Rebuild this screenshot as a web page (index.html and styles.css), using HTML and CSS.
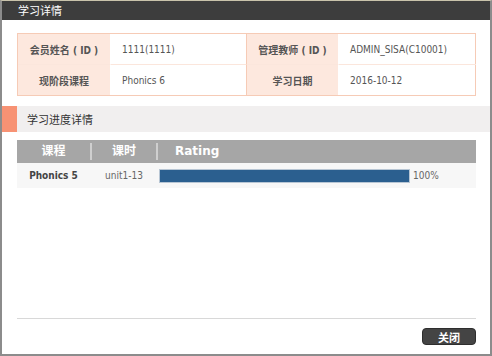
FILE: index.html
```html
<!DOCTYPE html>
<html lang="zh-CN">
<head>
    <meta charset="UTF-8">
    <title>学习详情</title>
    <link rel="stylesheet" href="styles.css">
</head>
<body>
    <div class="dialog">
        <div class="dialog-header">学习详情</div>

        <div class="info-table">
            <div class="info-label">会员姓名 ( ID )</div>
            <div class="info-value">1111(1111)</div>
            <div class="info-label">管理教师 ( ID )</div>
            <div class="info-value">ADMIN_SISA(C10001)</div>
            <div class="info-label row-last">现阶段课程</div>
            <div class="info-value row-last">Phonics 6</div>
            <div class="info-label row-last">学习日期</div>
            <div class="info-value row-last">2016-10-12</div>
        </div>

        <div class="section-title">
            <span class="section-accent"></span>
            <span class="section-text">学习进度详情</span>
        </div>

        <div class="progress-table">
            <div class="progress-head">
                <div class="col-course">课程</div>
                <div class="col-lesson">课时</div>
                <div class="col-rating">Rating</div>
            </div>
            <div class="progress-row">
                <div class="col-course course-name">Phonics 5</div>
                <div class="col-lesson">unit1-13</div>
                <div class="col-rating">
                    <div class="bar-track"><div class="bar-fill" style="width: 100%"></div></div>
                    <span class="bar-value">100%</span>
                </div>
            </div>
        </div>

        <div class="dialog-footer">
            <button class="close-btn">关闭</button>
        </div>
    </div>
</body>
</html>
```

FILE: styles.css
```css
* {
    margin: 0;
    padding: 0;
    box-sizing: border-box;
}

body {
    background: #ffffff;
    font-family: 'DejaVu Sans Condensed', 'DejaVu Sans', 'Noto Sans CJK SC', sans-serif;
    font-stretch: condensed;
    font-size: 10px;
    color: #444444;
}

.dialog {
    width: 492px;
    height: 356px;
    display: flex;
    flex-direction: column;
    border: 2px solid #8c8c8c;
    border-top: 1px solid #c9c3ab;
    background: #ffffff;
}

.dialog-header {
    height: 19px;
    line-height: 19px;
    background: #3d3d3d;
    color: #ffffff;
    font-size: 11px;
    padding-left: 16px;
    font-family: 'Noto Sans CJK SC', sans-serif;
}

.info-table {
    display: grid;
    grid-template-columns: 93px 136px 92px 137px;
    margin: 13px 14px 0 15px;
    border: 1px solid #f6cbb6;
}

.info-label,
.info-value {
    height: 31px;
    display: flex;
    align-items: center;
    border-bottom: 1px solid #fbe6dc;
}

.info-label {
    justify-content: center;
    background: #fde8de;
    font-weight: bold;
    color: #555555;
    border-right: 1px solid #ffffff;
}

.info-value {
    padding-left: 11px;
    color: #555555;
    border-right: 1px solid #f6cbb6;
}

.info-value:nth-child(4n) {
    border-right: none;
}

.row-last {
    border-bottom: none;
    height: 30px;
}

.section-title {
    display: flex;
    height: 26px;
    margin-top: 10px;
    background: #f1efef;
}

.section-accent {
    width: 15px;
    background: #f79274;
}

.section-text {
    line-height: 26px;
    padding-left: 10px;
    font-size: 11px;
    color: #333333;
    font-family: 'Noto Sans CJK SC', sans-serif;
}

.progress-table {
    margin: 8px 14px 0 15px;
}

.progress-head,
.progress-row {
    display: grid;
    grid-template-columns: 73px 68px 1fr;
}

.progress-head {
    height: 23px;
    background: #a6a6a6;
    color: #ffffff;
    font-weight: bold;
    font-size: 12px;
    align-items: center;
}

.progress-head > div {
    text-align: center;
    line-height: 17px;
}

.progress-head .col-lesson {
    border-left: 2px solid #cfcfcf;
    border-right: 2px solid #cfcfcf;
}

.progress-head .col-rating {
    text-align: left;
    padding-left: 17px;
    font-family: 'DejaVu Sans', sans-serif;
    font-stretch: normal;
}

.progress-row {
    height: 25px;
    background: #f7f7f7;
    align-items: center;
}

.progress-row .col-course,
.progress-row .col-lesson {
    text-align: center;
    color: #666666;
}

.course-name {
    font-weight: bold;
    color: #444444 !important;
}

.progress-row .col-rating {
    display: flex;
    align-items: center;
    padding-left: 1px;
}

.bar-track {
    width: 251px;
    height: 14px;
    border: 1px solid #b8c6d4;
    background: #ffffff;
}

.bar-fill {
    height: 100%;
    background: #2b5f8f;
}

.bar-value {
    margin-left: 3px;
    color: #666666;
}

.dialog-footer {
    margin: auto 14px 0 15px;
    height: 36px;
    border-top: 1px solid #d8d8d8;
    display: flex;
    justify-content: flex-end;
    padding-top: 9px;
}

.close-btn {
    width: 54px;
    height: 17px;
    background: #444444;
    border: 1px solid #2e2e2e;
    border-radius: 4px;
    color: #ffffff;
    font-size: 11px;
    font-weight: bold;
    font-family: 'Noto Sans CJK SC', sans-serif;
    cursor: pointer;
}
```
